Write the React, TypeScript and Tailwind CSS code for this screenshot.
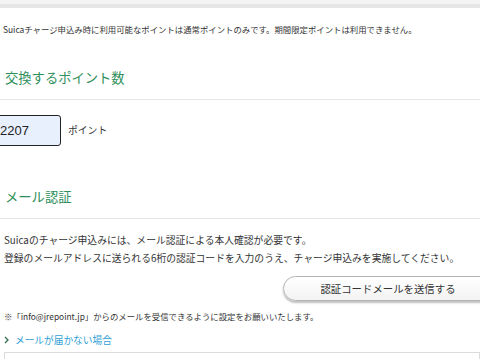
import React from "react";

const jp = { fontFamily: '"Noto Sans CJK JP", "Noto Sans", sans-serif' };

export default function App() {
  return (
    <div className="w-[480px] h-[359px] overflow-hidden bg-white text-[#333]" style={jp}>
      {/* top band */}
      <div className="h-[4px] bg-[#f4f4f4]" />
      <div className="h-[4px] bg-[#e6e6e6]" />

      <p className="mt-[14px] px-[3px] text-[8.4px] leading-[14px] whitespace-nowrap">
        Suicaチャージ申込み時に利用可能なポイントは通常ポイントのみです。期間限定ポイントは利用できません。
      </p>

      <div className="mt-[32px] pb-[11px] border-b border-[#e6e6e6]">
        <h2 className="px-[5px] text-[13.3px] leading-[20px] text-[#2f8f5b]">交換するポイント数</h2>
      </div>

      {/* points input */}
      <div className="mt-[15px] flex items-center">
        <div className="-ml-[40px] w-[101px] h-[31px] rounded-[3px] border-[1.5px] border-[#222] bg-[#e8f0fe] flex items-center pl-[39px] text-[13px] text-[#222]" style={{ fontFamily: '"Liberation Sans", sans-serif' }}>
          2207
        </div>
        <span className="ml-[7px] text-[9.8px]">ポイント</span>
      </div>

      <div className="mt-[41px] pb-[11px] border-b border-[#e6e6e6]">
        <h2 className="px-[5px] text-[13.3px] leading-[20px] text-[#2f8f5b]">メール認証</h2>
      </div>

      <div className="mt-[12px] px-[4px] text-[9.8px] leading-[18px] whitespace-nowrap">
        <p>Suicaのチャージ申込みには、メール認証による本人確認が必要です。</p>
        <p>登録のメールアドレスに送られる6桁の認証コードを入力のうえ、チャージ申込みを実施してください。</p>
      </div>

      <div className="mt-[9px] flex">
        <button className="ml-[283px] w-[212px] h-[25px] shrink-0 rounded-full border border-[#b5b5b5] bg-gradient-to-b from-white to-[#f3f3f3] shadow-[0_2px_2px_rgba(0,0,0,0.25)] text-[10.4px] text-[#333] pr-[2px]">
          認証コードメールを送信する
        </button>
      </div>

      <p className="mt-[8px] px-[4px] text-[8.4px] leading-[14px] whitespace-nowrap">
        ※「info@jrepoint.jp」からのメールを受信できるように設定をお願いいたします。
      </p>

      <a className="mt-[10px] px-[4px] flex items-center text-[9.7px] leading-[14px] text-[#2f9fd6]">
        <svg width="6" height="8" viewBox="0 0 6 8" className="mr-[5px]">
          <path d="M1 1l3 3-3 3" fill="none" stroke="#2f6f4f" strokeWidth="1.3" />
        </svg>
        メールが届かない場合
      </a>

      <div className="mt-[5px] ml-[4px] h-[20px] border border-[#dcdcdc]" />
    </div>
  );
}
